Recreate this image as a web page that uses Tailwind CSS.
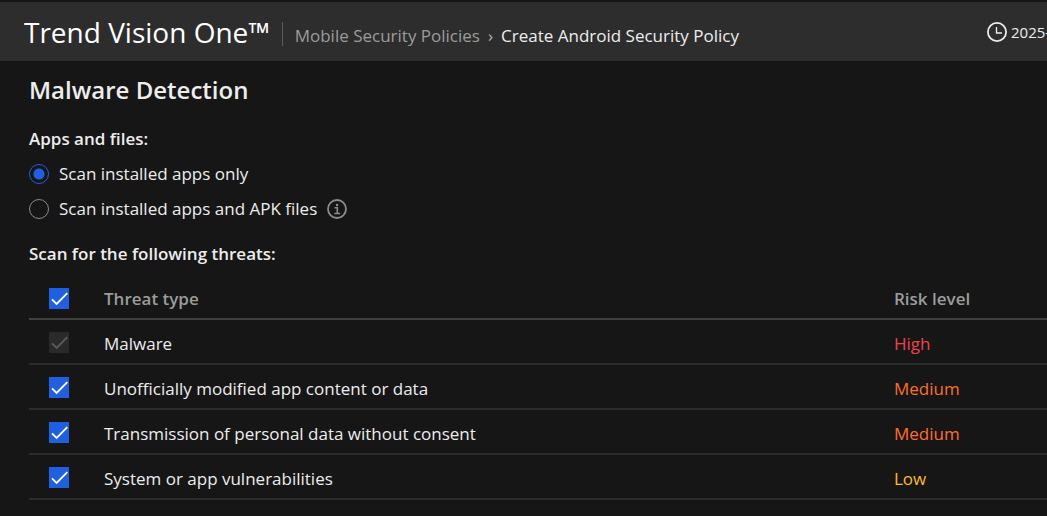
<!DOCTYPE html>
<html lang="en">
<head>
<meta charset="utf-8">
<meta name="viewport" content="width=device-width, initial-scale=1">
<title>Create Android Security Policy</title>
<script src="https://cdn.jsdelivr.net/npm/@tailwindcss/browser@4"></script>
</head>
<body class="min-h-screen overflow-x-hidden bg-[#161616] font-['Segoe_UI','Open_Sans',sans-serif] text-[17px] leading-6 text-[#ededed]">
<svg class="hidden">
  <symbol id="check" viewBox="0 0 20 21"><path d="M3 11.3l4.6 4.7L18.3 5.2" fill="none" stroke="currentColor" stroke-width="1.8"/></symbol>
</svg>
<header class="flex h-[61px] items-center border-t-2 border-[#161616] bg-[#2d2d2d] pl-6 whitespace-nowrap">
  <div class="text-[28px] leading-9 text-white">Trend Vision One™</div>
  <nav aria-label="Breadcrumb" class="mt-2 ml-3 flex items-center">
    <span class="mr-3 -mt-1 h-6 w-px bg-[#5c5c5c]"></span>
    <a href="#" class="text-[#9c9c9c]">Mobile Security Policies</a>
    <span class="mx-2 text-[#b5b5b5]">›</span>
    <span aria-current="page">Create Android Security Policy</span>
  </nav>
  <div class="ml-auto flex w-[60px] shrink-0 items-center gap-1 text-[15px]">
    <svg class="size-5 shrink-0" viewBox="0 0 20 20" fill="none" stroke="#ededed"><circle cx="10" cy="10" r="9.1" stroke-width="1.8"/><path d="M9.5 5v6h5.5" stroke-width="1.3"/></svg>
    <time>2025-</time>
  </div>
</header>
<main class="pt-[11px] pl-[29px]">
  <h1 class="text-2xl leading-9 font-semibold">Malware Detection</h1>
  <fieldset class="mt-[19px]">
    <legend class="font-semibold">Apps and files:</legend>
    <div class="mt-[11px] flex items-center gap-[10px]">
      <input type="radio" name="scope" id="apps" checked class="size-5 appearance-none rounded-full border border-[#8a8a8a] checked:border-[#1f5fe0] checked:bg-[radial-gradient(circle,#1f5fe0_5px,transparent_6px)]">
      <label for="apps">Scan installed apps only</label>
    </div>
    <div class="mt-[11px] flex items-center gap-[10px]">
      <input type="radio" name="scope" id="apk" class="size-5 appearance-none rounded-full border border-[#8a8a8a] checked:border-[#1f5fe0] checked:bg-[radial-gradient(circle,#1f5fe0_5px,transparent_6px)]">
      <label for="apk">Scan installed apps and APK files</label>
      <button type="button" aria-label="More information" class="size-5"><svg class="size-5" viewBox="0 0 20 20" fill="none" stroke="#8c8c8c"><circle cx="10" cy="10" r="9" stroke-width="1.8"/><path d="M7.5 8.7h2.8v5.8M7.3 14.5h5.8" stroke-width="1.6"/><path d="M9 4.9h2.2v2.2H9z" fill="#8c8c8c" stroke="none"/></svg></button>
    </div>
  </fieldset>
  <h2 id="threats" class="mt-[21px] font-semibold">Scan for the following threats:</h2>
  <table aria-labelledby="threats" class="mt-2 w-full table-fixed border-collapse text-left">
    <colgroup><col class="w-[75px]"><col><col class="w-[153px]"></colgroup>
    <thead>
      <tr class="h-[45px] border-b-2 border-[#404040] text-[#9c9c9c]">
        <th class="pt-1 pl-5"><span class="relative block h-[21px] w-5"><input type="checkbox" aria-label="Select all threats" checked class="peer block h-[21px] w-5 appearance-none bg-[#333] checked:bg-[#1f5fe0]"><svg class="pointer-events-none absolute inset-0 hidden h-[21px] w-5 text-white peer-checked:block"><use href="#check"/></svg></span></th>
        <th class="pt-1.5 font-semibold">Threat type</th><th class="pt-1.5 font-semibold">Risk level</th>
      </tr>
    </thead>
    <tbody>
      <tr class="h-[45px] border-b-2 border-[#2c2c2c]">
        <td class="pt-0.5 pl-5"><span class="relative block h-[21px] w-5"><input type="checkbox" id="t1" checked disabled class="peer block h-[21px] w-5 appearance-none bg-[#2a2a2a]"><svg class="pointer-events-none absolute inset-0 hidden h-[21px] w-5 text-[#5c5c5c] peer-checked:block"><use href="#check"/></svg></span></td>
        <td class="pt-1"><label for="t1">Malware</label></td><td class="pt-1 text-[#f0424b]">High</td>
      </tr>
      <tr class="h-[45px] border-b-2 border-[#2c2c2c]">
        <td class="pt-0.5 pl-5"><span class="relative block h-[21px] w-5"><input type="checkbox" id="t2" checked class="peer block h-[21px] w-5 appearance-none bg-[#333] checked:bg-[#1f5fe0]"><svg class="pointer-events-none absolute inset-0 hidden h-[21px] w-5 text-white peer-checked:block"><use href="#check"/></svg></span></td>
        <td class="pt-1"><label for="t2">Unofficially modified app content or data</label></td><td class="pt-1 text-[#ff6d2e]">Medium</td>
      </tr>
      <tr class="h-[45px] border-b-2 border-[#2c2c2c]">
        <td class="pt-0.5 pl-5"><span class="relative block h-[21px] w-5"><input type="checkbox" id="t3" checked class="peer block h-[21px] w-5 appearance-none bg-[#333] checked:bg-[#1f5fe0]"><svg class="pointer-events-none absolute inset-0 hidden h-[21px] w-5 text-white peer-checked:block"><use href="#check"/></svg></span></td>
        <td class="pt-1"><label for="t3">Transmission of personal data without consent</label></td><td class="pt-1 text-[#ff6d2e]">Medium</td>
      </tr>
      <tr class="h-[45px] border-b-2 border-[#2c2c2c]">
        <td class="pt-0.5 pl-5"><span class="relative block h-[21px] w-5"><input type="checkbox" id="t4" checked class="peer block h-[21px] w-5 appearance-none bg-[#333] checked:bg-[#1f5fe0]"><svg class="pointer-events-none absolute inset-0 hidden h-[21px] w-5 text-white peer-checked:block"><use href="#check"/></svg></span></td>
        <td class="pt-1"><label for="t4">System or app vulnerabilities</label></td><td class="pt-1 text-[#ffb62e]">Low</td>
      </tr>
    </tbody>
  </table>
</main>
</body>
</html>
